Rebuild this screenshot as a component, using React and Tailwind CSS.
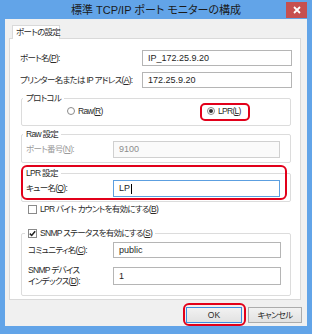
import React from 'react';

function Field({ value, w = 'w-[150px]', h = 'h-[16px]', disabled, focused, caret }) {
  const tone = disabled
    ? 'border-[#d0d0d0] bg-[#fafafa] text-[#8c8c8c]'
    : focused
      ? 'border-[#5c9fe0] bg-white text-[#1e1e1e]'
      : 'border-[#b5b5b5] bg-white text-[#1e1e1e]';
  return (
    <div className={`${w} ${h} border ${tone} pl-[5px] flex items-center text-[9px] leading-none tracking-normal`}>
      <span>{value}</span>
      {caret && <span className="w-px h-[10px] bg-black ml-px" />}
    </div>
  );
}

function Radio({ checked, children }) {
  return (
    <div className="flex items-center gap-[3px]">
      <span className="w-[8px] h-[8px] rounded-full border border-[#8a8a8a] bg-white flex items-center justify-center">
        {checked && <span className="w-[4px] h-[4px] rounded-full bg-[#333]" />}
      </span>
      <span>{children}</span>
    </div>
  );
}

function Check({ checked }) {
  return (
    <span className="w-[9px] h-[9px] border border-[#8a8a8a] bg-white flex items-center justify-center shrink-0">
      {checked && (
        <svg width="7" height="7" viewBox="0 0 7 7">
          <path d="M0.8 3.6 L2.7 5.5 L6.2 1.2" fill="none" stroke="#222" strokeWidth="1.5" />
        </svg>
      )}
    </span>
  );
}

function Group({ legend, legendClass = 'ml-[1px]', className = '', children }) {
  return (
    <fieldset className={`border border-[#dcdcdc] rounded-[2px] ml-[11px] w-[270px] ${className}`}>
      <legend className={`${legendClass} px-[3px] h-[14px] leading-[14px]`}>{legend}</legend>
      {children}
    </fieldset>
  );
}

const U = ({ children }) => <span className="underline underline-offset-1">{children}</span>;

export default function App() {
  return (
    <div className="w-[312px] h-[334px] bg-[#62a4e8] flex flex-col font-['Liberation_Sans','Noto_Sans_CJK_JP',sans-serif] text-[8.5px] tracking-[-0.7px] text-[#2a2a2a] [font-feature-settings:'palt'] whitespace-nowrap">
      <div className="h-[19px] flex items-start">
        <div className="w-[26px]" />
        <div className="flex-1 text-center text-[11px] tracking-normal leading-[21px] text-[#1a1a1a]">標準 TCP/IP ポート モニターの構成</div>
        <div className="w-[21px] h-[16px] mt-[2px] mr-[5px] bg-[#c75050] flex items-center justify-center">
          <svg width="8" height="8" viewBox="0 0 8 8">
            <path d="M1 1 L7 7 M7 1 L1 7" stroke="white" strokeWidth="1.8" />
          </svg>
        </div>
      </div>

      <div className="flex-1 mx-[5px] mb-[8px] bg-[#f0f0f0] flex flex-col">
        <div className="mt-[6px] ml-[7px] w-[48px] h-[14px] bg-white border border-b-0 border-[#d9d9d9] relative z-10 -mb-px flex items-center pl-[3px]">
          ポートの設定
        </div>

        <div className="ml-[4px] w-[292px] h-[262px] bg-white border border-[#d9d9d9] relative flex flex-col pt-[11px]">
          <div className="flex items-center h-[16px] pl-[10px] pr-[8px]">
            <div className="flex-1">ポート名(<U>P</U>):</div>
            <Field value="IP_172.25.9.20" />
          </div>
          <div className="flex items-center h-[16px] pl-[10px] pr-[8px] mt-[6px]">
            <div className="flex-1">プリンター名または IP アドレス(<U>A</U>):</div>
            <Field value="172.25.9.20" />
          </div>

          <Group legend="プロトコル" className="mt-[3px] pb-[8px]">
            <div className="flex items-center h-[12px] pl-[45px]">
              <div className="w-[140px]">
                <Radio>Raw(<U>R</U>)</Radio>
              </div>
              <Radio checked>LPR(<U>L</U>)</Radio>
            </div>
          </Group>

          <Group legend="Raw 設定" className="mt-[1px] pb-[4px]">
            <div className="flex items-center">
              <div className="w-[91px] pl-[4px] text-[#9a9a9a]">ポート番号(<U>N</U>):</div>
              <Field value="9100" w="w-[167px]" h="h-[17px]" disabled />
            </div>
          </Group>

          <Group legend="LPR 設定" className="mt-[3px] pb-[4px]">
            <div className="flex items-center">
              <div className="w-[91px] pl-[4px]">キュー名(<U>Q</U>):</div>
              <Field value="LP" w="w-[167px]" h="h-[17px]" focused caret />
            </div>
          </Group>

          <div className="flex items-center gap-[3px] h-[12px] ml-[18px] mt-[1px]">
            <Check />
            <span>LPR バイト カウントを有効にする(<U>B</U>)</span>
          </div>

          <Group
            legend={
              <span className="flex items-center gap-[3px]">
                <Check checked />
                <span>SNMP ステータスを有効にする(<U>S</U>)</span>
              </span>
            }
            legendClass="ml-[3px]"
            className="mt-[11px] pb-[8px]"
          >
            <div className="flex items-center mt-[2px]">
              <div className="w-[91px] pl-[6px]">コミュニティ名(<U>C</U>):</div>
              <Field value="public" w="w-[168px]" />
            </div>
            <div className="flex items-center mt-[7px]">
              <div className="w-[91px] pl-[6px] leading-[11px]">
                SNMP デバイス
                <br />
                インデックス(<U>D</U>):
              </div>
              <Field value="1" w="w-[168px]" h="h-[18px]" />
            </div>
          </Group>

          <div className="absolute left-[190px] top-[64px] w-[50px] h-[18px] border-2 border-[#e2001a] rounded-[5px]" />
          <div className="absolute left-[11px] top-[126px] w-[266px] h-[35px] border-2 border-[#e2001a] rounded-[6px]" />
        </div>

        <div className="mt-[7px] flex justify-end gap-[6px] pr-[5px]">
          <div className="relative">
            <div className="w-[56px] h-[16px] border border-[#3d8ee0] bg-gradient-to-b from-[#f2f2f2] to-[#e2e2e2] flex items-center justify-center tracking-normal">
              OK
            </div>
            <div className="absolute left-[-3px] right-[-4px] top-[-4px] bottom-[-3px] border-2 border-[#e2001a] rounded-[6px]" />
          </div>
          <div className="w-[54px] h-[16px] border border-[#acacac] bg-gradient-to-b from-[#f2f2f2] to-[#e2e2e2] flex items-center justify-center">
            キャンセル
          </div>
        </div>
      </div>
    </div>
  );
}
